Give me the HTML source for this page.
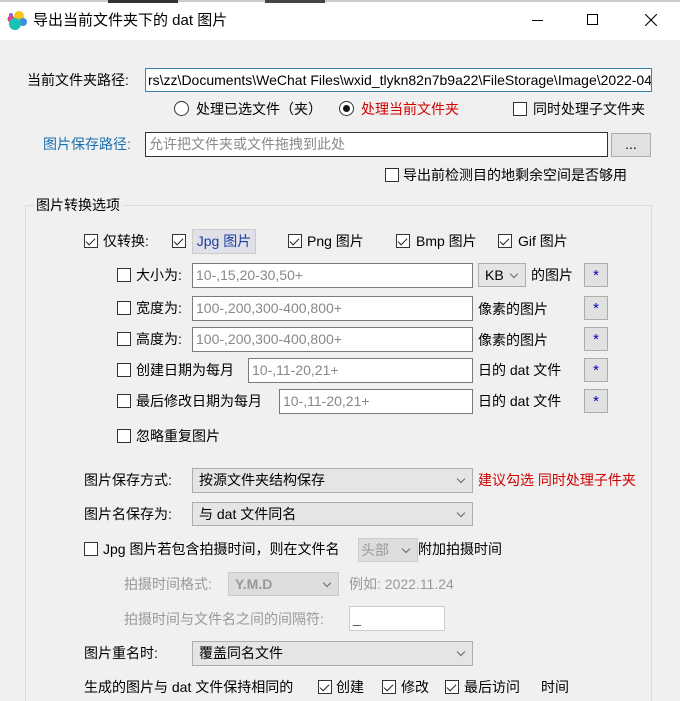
<!DOCTYPE html>
<html><head><meta charset="utf-8"><style>
*{margin:0;padding:0;box-sizing:border-box}
html{width:680px;height:701px;overflow:hidden}
body{width:680px;height:701px;overflow:hidden;background:#f0f0f0;position:relative;font-family:"Liberation Sans","Noto Sans CJK SC","Microsoft YaHei",sans-serif;font-size:14px;color:#000}
.t{position:absolute;white-space:nowrap;line-height:18px;transform:translateY(-9px)}
.cb{position:absolute;width:14px;height:14px;border:1px solid #333;background:#fff;transform:translateY(-7px)}
.cb.on::after{content:"";position:absolute;left:3px;top:1px;width:4px;height:8px;border:solid #222;border-width:0 1.3px 1.3px 0;transform:rotate(45deg)}
.in{position:absolute;background:#fff;border:1px solid #7a7a7a;padding-left:3px;line-height:22px;color:#888;overflow:hidden;white-space:nowrap}
.sel{position:absolute;background:#e5e5e5;border:1px solid #adadad;padding-left:6px;line-height:22px;overflow:hidden;white-space:nowrap}
.sel::after{content:"";position:absolute;right:8px;top:7px;width:5px;height:5px;border:solid #666;border-width:0 1px 1px 0;transform:rotate(45deg)}
.star{position:absolute;width:24px;height:24px;background:#e1e1e1;border:1px solid #adadad;color:#0000c0;text-align:center;line-height:24px;font-size:15px}
.g{color:#999}
</style></head><body>
<div style="position:absolute;left:0;top:0;width:680px;height:40px;background:#fff"></div>
<div style="position:absolute;left:0;top:0;width:680px;height:2px;background:#ccc"></div>
<div style="position:absolute;left:108px;top:0;width:70px;height:3px;background:#333"></div>
<div style="position:absolute;left:265px;top:0;width:60px;height:3px;background:#444"></div>
<svg style="position:absolute;left:6px;top:10px" width="22" height="22" viewBox="0 0 22 22"><circle cx="13" cy="6" r="5" fill="#f5c518"/><circle cx="5" cy="9" r="3.5" fill="#e8417a"/><circle cx="17" cy="12" r="4" fill="#3f8ee0"/><circle cx="9" cy="14" r="6" fill="#1cc0b4"/><circle cx="5" cy="5" r="2" fill="#9b59d0"/></svg>
<div class="t" style="left:33px;top:21px;font-size:15px">导出当前文件夹下的 dat 图片</div>
<div style="position:absolute;left:532px;top:20px;width:11px;height:1px;background:#000"></div>
<div style="position:absolute;left:587px;top:14px;width:11px;height:11px;border:1px solid #000"></div>
<svg style="position:absolute;left:645px;top:14px" width="12" height="12"><path d="M0 0L12 12M12 0L0 12" stroke="#000" stroke-width="1.1"/></svg>

<div class="t" style="left:27px;top:80px">当前文件夹路径:</div>
<div class="in" style="left:145px;top:68px;width:507px;height:24px;border-color:#3c7fb1;color:#000;padding-left:2px">rs\zz\Documents\WeChat Files\wxid_tlykn82n7b9a22\FileStorage\Image\2022-04</div>
<div style="position:absolute;left:174px;top:101px;width:15px;height:15px;border:1px solid #333;border-radius:50%;background:#fff"></div>
<div class="t" style="left:196px;top:109px">处理已选文件（夹）</div>
<div style="position:absolute;left:339px;top:101px;width:15px;height:15px;border:1px solid #333;border-radius:50%;background:#fff"><div style="position:absolute;left:3px;top:3px;width:7px;height:7px;border-radius:50%;background:#111"></div></div>
<div class="t" style="left:361px;top:109px;color:#d00000">处理当前文件夹</div>
<div class="cb" style="left:513px;top:109px"></div>
<div class="t" style="left:533px;top:109px">同时处理子文件夹</div>

<div class="t" style="left:43px;top:144px;color:#1a6fb0">图片保存路径:</div>
<div class="in" style="left:145px;top:132px;width:463px;height:25px;border-color:#333">允许把文件夹或文件拖拽到此处</div>
<div style="position:absolute;left:611px;top:133px;width:40px;height:24px;background:#e1e1e1;border:1px solid #adadad;text-align:center;line-height:20px">...</div>
<div class="cb" style="left:385px;top:175px"></div>
<div class="t" style="left:403px;top:175px">导出前检测目的地剩余空间是否够用</div>

<div style="position:absolute;left:25px;top:205px;width:627px;height:510px;border:1px solid #dcdcdc"></div>
<div class="t" style="left:34px;top:205px;background:#f0f0f0;padding:0 2px">图片转换选项</div>

<div class="cb on" style="left:84px;top:241px"></div><div class="t" style="left:103px;top:241px">仅转换:</div>
<div class="cb on" style="left:172px;top:241px"></div>
<div style="position:absolute;left:192px;top:229px;width:64px;height:25px;background:#e0e0e8;border:1px solid #ccc;color:#1a3fa0;line-height:23px;text-align:center">Jpg 图片</div>
<div class="cb on" style="left:288px;top:241px"></div><div class="t" style="left:307px;top:241px">Png 图片</div>
<div class="cb on" style="left:396px;top:241px"></div><div class="t" style="left:416px;top:241px">Bmp 图片</div>
<div class="cb on" style="left:498px;top:241px"></div><div class="t" style="left:518px;top:241px">Gif 图片</div>

<div class="cb" style="left:117px;top:275px"></div><div class="t" style="left:136px;top:275px">大小为:</div>
<div class="in" style="left:192px;top:263px;width:281px;height:25px">10-,15,20-30,50+</div>
<div class="sel" style="left:478px;top:263px;width:48px;height:24px">KB</div>
<div class="t" style="left:531px;top:275px">的图片</div>
<div class="star" style="left:584px;top:263px">*</div>

<div class="cb" style="left:117px;top:308px"></div><div class="t" style="left:136px;top:308px">宽度为:</div>
<div class="in" style="left:192px;top:296px;width:281px;height:25px">100-,200,300-400,800+</div>
<div class="t" style="left:478px;top:309px">像素的图片</div>
<div class="star" style="left:584px;top:296px">*</div>

<div class="cb" style="left:117px;top:339px"></div><div class="t" style="left:136px;top:339px">高度为:</div>
<div class="in" style="left:192px;top:327px;width:281px;height:25px">100-,200,300-400,800+</div>
<div class="t" style="left:478px;top:340px">像素的图片</div>
<div class="star" style="left:584px;top:327px">*</div>

<div class="cb" style="left:117px;top:370px"></div><div class="t" style="left:136px;top:370px">创建日期为每月</div>
<div class="in" style="left:248px;top:358px;width:225px;height:25px">10-,11-20,21+</div>
<div class="t" style="left:478px;top:370px">日的 dat 文件</div>
<div class="star" style="left:584px;top:358px">*</div>

<div class="cb" style="left:117px;top:401px"></div><div class="t" style="left:136px;top:401px">最后修改日期为每月</div>
<div class="in" style="left:279px;top:389px;width:194px;height:25px">10-,11-20,21+</div>
<div class="t" style="left:478px;top:401px">日的 dat 文件</div>
<div class="star" style="left:584px;top:389px">*</div>

<div class="cb" style="left:117px;top:436px"></div><div class="t" style="left:136px;top:436px">忽略重复图片</div>

<div class="t" style="left:84px;top:480px">图片保存方式:</div>
<div class="sel" style="left:192px;top:468px;width:281px;height:25px">按源文件夹结构保存</div>
<div class="t" style="left:478px;top:480px;color:#d00000">建议勾选 同时处理子件夹</div>

<div class="t" style="left:84px;top:514px">图片名保存为:</div>
<div class="sel" style="left:192px;top:502px;width:281px;height:24px">与 dat 文件同名</div>

<div class="cb" style="left:84px;top:549px"></div>
<div class="t" style="left:103px;top:549px">Jpg 图片若包含拍摄时间，则在文件名</div>
<div class="sel" style="left:358px;top:538px;width:60px;height:24px;color:#999;border-color:#ccc;background:#ddd;padding-left:2px">头部</div>
<div class="t" style="left:418px;top:549px">附加拍摄时间</div>

<div class="t g" style="left:124px;top:584px">拍摄时间格式:</div>
<div class="sel" style="left:228px;top:572px;width:111px;height:24px;color:#999;border-color:#ccc;background:#ddd;font-weight:bold">Y.M.D</div>
<div class="t g" style="left:349px;top:584px">例如: 2022.11.24</div>
<div class="t g" style="left:124px;top:619px">拍摄时间与文件名之间的间隔符:</div>
<div class="in" style="left:349px;top:606px;width:96px;height:25px;border-color:#ccc;color:#444">_</div>

<div class="t" style="left:84px;top:653px">图片重名时:</div>
<div class="sel" style="left:192px;top:641px;width:281px;height:25px">覆盖同名文件</div>

<div class="t" style="left:84px;top:687px">生成的图片与 dat 文件保持相同的</div>
<div class="cb on" style="left:318px;top:687px"></div><div class="t" style="left:336px;top:687px">创建</div>
<div class="cb on" style="left:382px;top:687px"></div><div class="t" style="left:401px;top:687px">修改</div>
<div class="cb on" style="left:445px;top:687px"></div><div class="t" style="left:464px;top:687px">最后访问</div>
<div class="t" style="left:541px;top:687px">时间</div>
</body></html>
